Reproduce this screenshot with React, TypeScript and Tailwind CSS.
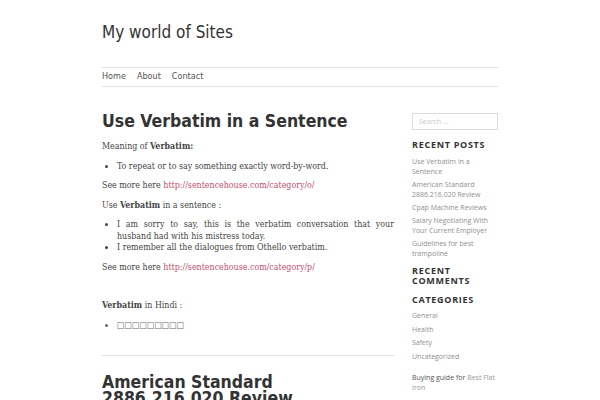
const sans = { fontFamily: '"DejaVu Sans Condensed", "DejaVu Sans", sans-serif' };
const serif = { fontFamily: '"DejaVu Serif Condensed", "DejaVu Serif", serif' };

const recentPosts = [
  "Use Verbatim in a Sentence",
  "American Standard 2886.216.020 Review",
  "Cpap Machine Reviews",
  "Salary Negotiating With Your Current Employer",
  "Guidelines for best trampoline",
];

const categories = ["General", "Health", "Safety", "Uncategorized"];

function Link({ href }: { href: string }) {
  return <a className="text-[#c0506e]">{href}</a>;
}

function Sidebar() {
  return (
    <aside className="w-[86px] shrink-0 font-['Open_Sans',sans-serif] text-[7px] leading-[10px] text-[#8f8f8f]">
      <div className="mt-[3px] flex h-[17px] items-center border border-[#dcdcdc] px-[6px] text-[7px] text-[#c8c8c8]">
        Search …
      </div>
      <h3 className="mt-[10px] text-[9px] font-bold uppercase leading-[10px] tracking-[0.08em] text-[#333]">
        Recent Posts
      </h3>
      <ul className="mt-[7px] flex flex-col gap-[3px]">
        {recentPosts.map((p) => (
          <li key={p}>{p}</li>
        ))}
      </ul>
      <h3 className="mt-[7px] text-[9px] font-bold uppercase leading-[10px] tracking-[0.08em] text-[#333]">
        Recent Comments
      </h3>
      <h3 className="mt-[9px] text-[9px] font-bold uppercase leading-[10px] tracking-[0.08em] text-[#333]">
        Categories
      </h3>
      <ul className="mt-[6px] flex flex-col gap-[3.6px]">
        {categories.map((c) => (
          <li key={c}>{c}</li>
        ))}
      </ul>
      <p className="mt-[11px] text-[#555]">
        Buying guide for <span className="text-[#9a9a9a]">Best Flat Iron</span>
      </p>
    </aside>
  );
}

export default function App() {
  return (
    <div className="h-[400px] w-[600px] overflow-hidden bg-white text-[#333]">
      <div className="mx-auto w-[396px]">
        <header className="pt-[20px]" style={sans}>
          <h1 className="text-[17px] leading-[24px] text-[#333]">My world of Sites</h1>
          <nav className="mt-[23px] flex h-[20px] items-center gap-[11px] border-y border-[#e2e2e2] text-[9px] text-[#555]">
            <span>Home</span>
            <span>About</span>
            <span>Contact</span>
          </nav>
        </header>

        <div className="mt-[23px] flex justify-between">
          <main className="w-[292px] shrink-0">
            <h2 className="text-[17.5px] font-bold leading-[22px] text-[#333]" style={sans}>
              Use Verbatim in a Sentence
            </h2>
            <div className="mt-[9px] text-justify text-[8.8px] leading-[11.5px] text-[#444]" style={serif}>
              <p>
                Meaning of <strong>Verbatim:</strong>
              </p>
              <ul className="mt-[8px] list-disc pl-[15px]">
                <li>To repeat or to say something exactly word-by-word.</li>
              </ul>
              <p className="mt-[8px]">
                See more here <Link href="http://sentencehouse.com/category/o/" />
              </p>
              <p className="mt-[8px]">
                Use <strong>Verbatim</strong> in a sentence :
              </p>
              <ul className="mt-[8px] list-disc pl-[15px]">
                <li>I am sorry to say, this is the verbatim conversation that your husband had with his mistress today.</li>
                <li>I remember all the dialogues from Othello verbatim.</li>
              </ul>
              <p className="mt-[8px]">
                See more here <Link href="http://sentencehouse.com/category/p/" />
              </p>
              <p className="mt-[27px]">
                <strong>Verbatim</strong> in Hindi :
              </p>
              <ul className="mt-[8px] list-disc pl-[15px]">
                <li style={sans} className="text-[#666]">□□□□□□□□□</li>
              </ul>
            </div>
            <hr className="mt-[24px] border-[#e2e2e2]" />
            <h2 className="mt-[18px] text-[17.5px] font-bold leading-[16px] text-[#333]" style={sans}>
              American Standard 2886.216.020 Review
            </h2>
          </main>
          <Sidebar />
        </div>
      </div>
    </div>
  );
}
